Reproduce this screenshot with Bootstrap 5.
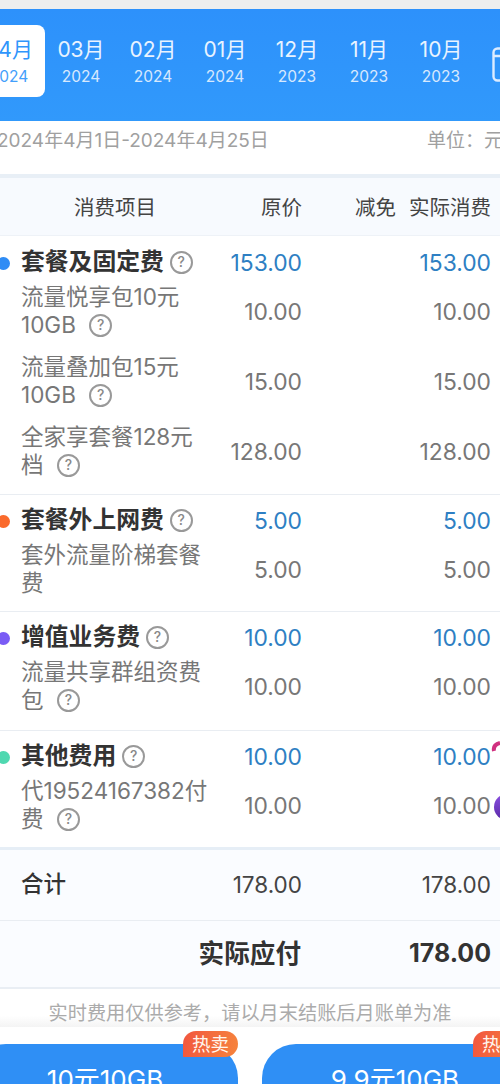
<!DOCTYPE html>
<html lang="zh"><head><meta charset="utf-8">
<title>账单</title>
<link href="https://cdn.jsdelivr.net/npm/bootstrap@5.3.0/dist/css/bootstrap.min.css" rel="stylesheet">
<style>
html,body{height:1084px;overflow:hidden}
body{font-family:Inter,"Noto Sans CJK SC","Noto Sans",sans-serif;background:#fff;color:#333;position:relative}
.topgap{height:9px;background:#eeeeee}
.monthbar{height:112px;background:linear-gradient(#2d91fb,#3199fb);padding-top:16px;margin-left:-27px;width:540px}
.mtab{width:72px;height:72px;flex:none;color:#e9f3ff;border-radius:8px;line-height:1;padding-top:14px}
.mtab b{font-weight:400;font-size:21px;display:block;margin-bottom:9px}
.mtab i{font-style:normal;font-size:15.5px;display:block;opacity:.9}
.mtab.on{background:#fff;color:#2f95fb}
.calico{flex:none;margin-left:15px;margin-top:22px}
.daterow{height:53px;padding-top:3px;font-size:19px;color:#a0a0a0;line-height:34px;margin-left:-3px;margin-right:-3px}
.thick{height:4px;background:#e8eff6}
.headrow{height:58px;background:#f7fafe;font-size:20.5px;color:#444;border-bottom:1px solid #eef2f7;padding:3px 9px 0 0}
.c-name{width:206px;flex:none;padding-left:21px;white-space:nowrap}
.c-price{width:96px;flex:none;text-align:right}
.c-disc{width:94px;flex:none;text-align:right}
.c-real{flex:1;text-align:right}
.sect{border-bottom:1px solid #e9edf2;padding:9px 9px 14px 0}
.sect.s1{padding-top:10px;padding-bottom:15px}
.sect.s3{padding-bottom:16px}
.sect.s4{padding-bottom:14px;border-bottom:3px solid #e6eef6}
.shead{height:32px;font-size:22.8px;margin-bottom:5px;color:#2e7fc3}
.shead .c-price,.shead .c-real,.item .c-price,.item .c-real{padding-top:2px}
.shead .c-name{font-size:23.8px;font-weight:700;color:#333;padding-left:0}
.ldot{width:13px;height:13px;border-radius:50%;margin:2px 11px 0 -3px;flex:none}
.item{font-size:22.8px;color:#777;margin-bottom:14px}
.item:last-child{margin-bottom:0}
.item .c-name{font-size:22.5px;line-height:28px}
.qm{display:inline-flex;align-items:center;justify-content:center;width:23px;height:23px;border:2px solid #999;border-radius:50%;font-size:14px;line-height:1;color:#888;font-weight:500;vertical-align:3px;margin-left:6px}
.item .qm{margin-left:7px}
.sumbox{background:#fafcff}
.sumrow{height:71px;border-bottom:1px solid #e9edf2;padding-right:9px;font-size:22.5px;color:#444}
.sumrow .c-name{font-weight:500;color:#333;margin-top:-3px}
.payrow{height:68px;border-bottom:2px solid #e9eef4;padding-right:9px;font-size:25px;font-weight:700;color:#333}
.payrow .plabel{width:301px;flex:none;text-align:right;font-size:25.6px}
.note{height:38px;font-size:19.2px;color:#ababab;line-height:48px;text-align:center;background:linear-gradient(#fff 70%,#f4f4f4)}
.buybar{background:#fff;padding-top:17px;margin-left:-28px;width:560px;gap:24px}
.buybtn{width:266px;height:80px;flex:none;background:#2f8ff5;border-radius:34px 34px 0 0;color:#fff;font-size:26px;text-align:center;padding-top:16px;position:relative;border:0}
.hot{position:absolute;right:0;top:-13px;width:55px;height:26px;border-radius:13px 13px 13px 0;background:linear-gradient(100deg,#f1563f,#f6843c);font-size:18.5px;line-height:26px;color:#fff6ee}
.floatball{position:absolute;right:0;top:740px}
</style></head>
<body>
<div class="topgap"></div>
<div class="monthbar d-flex">
  <div class="mtab on text-center"><b>04月</b><i>2024</i></div>
  <div class="mtab text-center"><b>03月</b><i>2024</i></div>
  <div class="mtab text-center"><b>02月</b><i>2024</i></div>
  <div class="mtab text-center"><b>01月</b><i>2024</i></div>
  <div class="mtab text-center"><b>12月</b><i>2023</i></div>
  <div class="mtab text-center"><b>11月</b><i>2023</i></div>
  <div class="mtab text-center"><b>10月</b><i>2023</i></div>
  <svg class="calico" width="28" height="35" viewBox="0 0 28 35" fill="none" stroke="#dcecff" stroke-width="2.4"><rect x="1.5" y="1.5" width="25" height="32" rx="4"/><path d="M1.5 9h25M9 15h16M9 21h16M9 27h16"/></svg>
</div>
<div class="daterow d-flex justify-content-between"><span>2024年4月1日-2024年4月25日</span><span>单位：元</span></div>
<div class="thick"></div>
<div class="headrow d-flex align-items-center">
  <div class="c-name text-center ps-4 pe-0">消费项目</div><div class="c-price">原价</div><div class="c-disc">减免</div><div class="c-real">实际消费</div>
</div>

<div class="sect s1">
  <div class="shead d-flex align-items-center"><div class="c-name d-flex align-items-center"><span class="ldot" style="background:#2f8cf5"></span>套餐及固定费<span class="qm">?</span></div><div class="c-price">153.00</div><div class="c-disc"></div><div class="c-real">153.00</div></div>
  <div class="item d-flex align-items-center"><div class="c-name">流量悦享包10元<br>10GB <span class="qm">?</span></div><div class="c-price">10.00</div><div class="c-disc"></div><div class="c-real">10.00</div></div>
  <div class="item d-flex align-items-center"><div class="c-name">流量叠加包15元<br>10GB <span class="qm">?</span></div><div class="c-price">15.00</div><div class="c-disc"></div><div class="c-real">15.00</div></div>
  <div class="item d-flex align-items-center"><div class="c-name">全家享套餐128元<br>档 <span class="qm">?</span></div><div class="c-price">128.00</div><div class="c-disc"></div><div class="c-real">128.00</div></div>
</div>
<div class="sect">
  <div class="shead d-flex align-items-center"><div class="c-name d-flex align-items-center"><span class="ldot" style="background:#fa6a2c"></span>套餐外上网费<span class="qm">?</span></div><div class="c-price">5.00</div><div class="c-disc"></div><div class="c-real">5.00</div></div>
  <div class="item d-flex align-items-center"><div class="c-name">套外流量阶梯套餐<br>费</div><div class="c-price">5.00</div><div class="c-disc"></div><div class="c-real">5.00</div></div>
</div>
<div class="sect s3">
  <div class="shead d-flex align-items-center"><div class="c-name d-flex align-items-center"><span class="ldot" style="background:#7a5cf5"></span>增值业务费<span class="qm">?</span></div><div class="c-price">10.00</div><div class="c-disc"></div><div class="c-real">10.00</div></div>
  <div class="item d-flex align-items-center"><div class="c-name">流量共享群组资费<br>包 <span class="qm">?</span></div><div class="c-price">10.00</div><div class="c-disc"></div><div class="c-real">10.00</div></div>
</div>
<div class="sect s4">
  <div class="shead d-flex align-items-center"><div class="c-name d-flex align-items-center"><span class="ldot" style="background:#4fd8b0"></span>其他费用<span class="qm">?</span></div><div class="c-price">10.00</div><div class="c-disc"></div><div class="c-real">10.00</div></div>
  <div class="item d-flex align-items-center"><div class="c-name">代19524167382付<br>费 <span class="qm">?</span></div><div class="c-price">10.00</div><div class="c-disc"></div><div class="c-real">10.00</div></div>
</div>

<div class="sumbox">
  <div class="sumrow d-flex align-items-center"><div class="c-name">合计</div><div class="c-price">178.00</div><div class="c-disc"></div><div class="c-real">178.00</div></div>
  <div class="payrow d-flex align-items-center"><div class="plabel">实际应付</div><div class="c-real">178.00</div></div>
</div>
<div class="note">实时费用仅供参考，请以月末结账后月账单为准</div>
<div class="buybar d-flex">
  <div class="buybtn">10元10GB<span class="hot">热卖</span></div>
  <div class="buybtn">9.9元10GB<span class="hot">热卖</span></div>
</div>
<svg class="floatball" width="10" height="82" viewBox="0 0 10 82" aria-hidden="true"><defs><linearGradient id="ballfill" x1="0" y1="0" x2="0" y2="1"><stop offset="0" stop-color="#8a4fe0"/><stop offset="1" stop-color="#5a2aa8"/></linearGradient></defs><path d="M4 11C3 6 6 4 10 3" fill="none" stroke="#d0307f" stroke-width="4"/><circle cx="17" cy="67" r="13" fill="url(#ballfill)"/></svg>
<script src="https://cdn.jsdelivr.net/npm/bootstrap@5.3.0/dist/js/bootstrap.bundle.min.js"></script>
</body></html>
